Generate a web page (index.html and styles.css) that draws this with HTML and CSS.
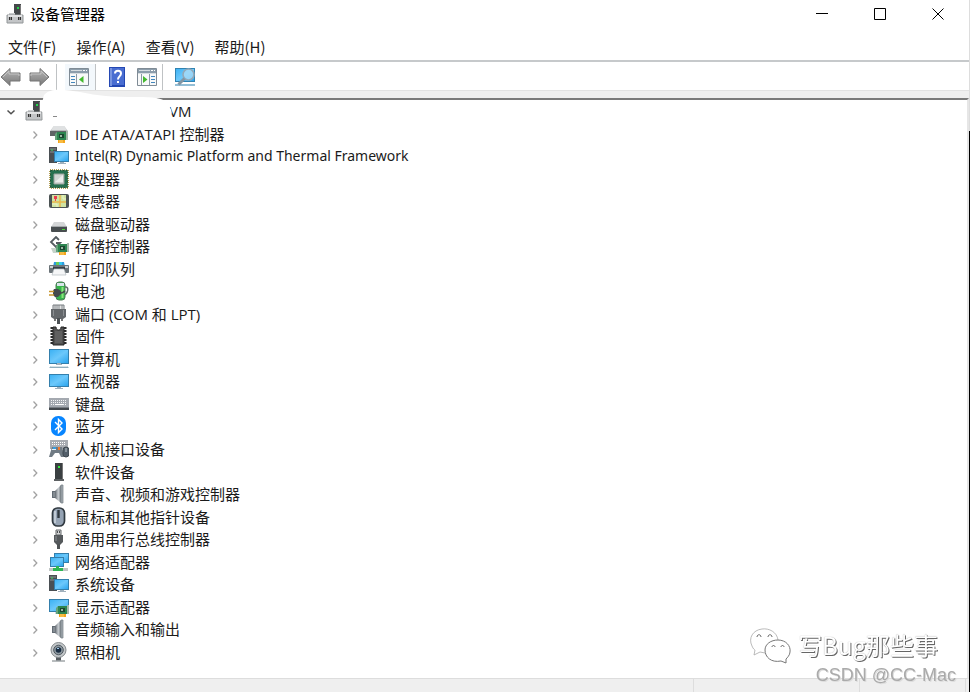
FILE: index.html
```html
<!DOCTYPE html>
<html lang="zh-CN">
<head>
<meta charset="utf-8">
<title>设备管理器</title>
<link rel="stylesheet" href="styles.css">
</head>
<body>
<svg class="defs" aria-hidden="true">
  <defs>
    <linearGradient id="screen" x1="0" y1="0" x2="1" y2="1"><stop offset="0" stop-color="#3db2f4"/><stop offset=".5" stop-color="#6cc8fb"/><stop offset="1" stop-color="#2ba5ee"/></linearGradient>
    <linearGradient id="cone" x1="0" y1="0" x2="1" y2="0"><stop offset="0" stop-color="#60676e"/><stop offset=".55" stop-color="#c9ced2"/><stop offset="1" stop-color="#737b82"/></linearGradient>
    <linearGradient id="arrow" x1="0" y1="0" x2="0" y2="1"><stop offset="0" stop-color="#b6b6b6"/><stop offset=".5" stop-color="#989898"/><stop offset="1" stop-color="#777"/></linearGradient>
    <symbol id="host" viewBox="0 0 18 20">
      <rect x="8" y="0" width="7" height="12" fill="#44484a"/><rect x="14" y="1" width="1" height="10" fill="#777"/><rect x="11" y="3" width="2" height="2" fill="#24d64a"/>
      <path d="M3 9h6v3H3z" fill="#c9cbcd"/><path d="M1 11h16v8H1z" fill="#c3c5c7" stroke="#929698"/><path d="M2 11h14v2H2z" fill="#e1e2e3"/><path d="M3 13h3v3H3zM12 13h3v3h-3z" fill="#333"/><path d="M4 13h1v3H4zM13 13h1v3h-1z" fill="#888"/>
    </symbol>
    <symbol id="card" viewBox="0 0 13 12">
      <path d="M2 1h9v8H2z" fill="#2d8550"/><path d="M0 3l2-2v8H0z" fill="#65a47b"/><path d="M11 0h2v9h-2z" fill="#a6b8aa"/><path d="M4 3h5v4H4z" fill="#1b4630"/><path d="M5 4h2v2H5z" fill="#9bb6a0"/><path d="M3 9h7v3H3z" fill="#f4a51b"/><path d="M5 9v3M7 9v3" stroke="#fbd16b" fill="none"/>
    </symbol>
    <symbol id="tower" viewBox="0 0 20 20">
      <path d="M0 1h8v16H0z" fill="#4a4f53"/><path d="M1 3h6M1 6h6" stroke="#8b9194"/><path d="M2 4h2" stroke="#42df65"/><path d="M5 5h15v11H5z" fill="#347fac"/><path d="M6 6h13v9H6z" fill="url(#screen)"/><path d="M11 16h4v1h2v1H9v-1h2z" fill="#a0b0bc"/>
    </symbol>
    <symbol id="speaker" viewBox="0 0 20 20">
      <path d="M3 7h4v7H3z" fill="#626b73"/><path d="M6 7l6-6v18l-6-5z" fill="url(#cone)"/><path d="M12 1h2v18h-2z" fill="#a5acb2" stroke="#737b82" stroke-width=".7"/><path d="M5 8v5" stroke="#a5adb3"/>
    </symbol>
    <symbol id="chevron" viewBox="0 0 10 10"><path d="M3.500 2.500 6.800 6 3.500 9.500" fill="none" stroke="#a2a2a2" stroke-width="1.300"/></symbol>
  </defs>
</svg>
<div class="window">
  <header class="titlebar">
    <svg class="app-icon"><use href="#host"/></svg>
    <h1>设备管理器</h1>
    <div class="window-controls">
      <button aria-label="最小化"><svg viewBox="0 0 13 13"><path d="M0 6.500h12" /></svg></button>
      <button aria-label="最大化"><svg viewBox="0 0 13 13"><path d="M.5 1.500h11v11H.5z"/></svg></button>
      <button aria-label="关闭"><svg viewBox="0 0 13 13"><path d="m.5 1.500 11 11m0-11-11 11"/></svg></button>
    </div>
  </header>
  <nav class="menubar">
    <button>文件(F)</button><button>操作(A)</button><button>查看(V)</button><button>帮助(H)</button>
  </nav>
  <div class="toolbar" role="toolbar">
    <button class="nav-tool" aria-label="后退"><svg viewBox="0 0 22 20"><path d="M1 10 10 1.500v4.500h10v8H10v4.500z" fill="url(#arrow)" stroke="#747474"/><path d="M3 10l6-6v3h10v2" fill="none" stroke="#c4c4c4"/></svg></button>
    <button class="nav-tool" aria-label="前进"><svg viewBox="0 0 22 20"><path d="M21 10 12 1.500v4.500H2v8h10v4.500z" fill="url(#arrow)" stroke="#747474"/><path d="M3 9V7h10V4l6 6" fill="none" stroke="#c4c4c4"/></svg></button>
    <span class="separator"></span>
    <button class="tool hot" aria-label="显示/隐藏控制台树"><svg viewBox="0 0 20 18"><path d="M.5.5h19v17H.5z" fill="#f8f9f9" stroke="#7f8b95"/><path d="M1 1h18v4H1z" fill="#8c9dab"/><path d="M2 2.500h11M1 5.500h18" stroke="#d6dce0"/><path d="M14 2h2v1h-2zM17 2h1v1h-1z" fill="#fff"/><path d="M7.500 6v11" stroke="#8b99a4"/><path d="M2 8.500h4M2 11.500h4M2 14.500h4" stroke="#4387bd"/><path d="M14.500 8v7L10 11.500z" fill="#43b92e"/></svg></button>
    <span class="separator"></span>
    <button class="tool" aria-label="帮助"><svg class="book" viewBox="0 0 16 20"><path d="M0 0h16v20H0z" fill="#2448b3"/><path d="M3 1h12v17H3z" fill="#496dd1"/><path d="M1 1h2v18H1z" fill="#7894df"/><path d="M6 6.500C6 2.800 12 2.800 12 6.500c0 3-3 2.800-3 6" fill="none" stroke="#fff" stroke-width="2"/><path d="M8 14h2v2H8z" fill="#fff"/></svg></button>
    <button class="tool" aria-label="属性"><svg viewBox="0 0 20 18"><path d="M.5.5h19v17H.5z" fill="#f8f9f9" stroke="#7f8b95"/><path d="M1 1h18v4H1z" fill="#8c9dab"/><path d="M2 2.500h11M1 5.500h18" stroke="#d6dce0"/><path d="M14 2h2v1h-2zM17 2h1v1h-1z" fill="#fff"/><path d="M12.500 6v11M4.500 6v11" stroke="#8b99a4"/><path d="M14 8.500h4M14 11.500h4M14 14.500h4" stroke="#4387bd"/><path d="M6 8v7l4.500-3.500z" fill="#43b92e"/></svg></button>
    <span class="separator"></span>
    <button class="tool" aria-label="扫描检测硬件改动"><svg class="scan" viewBox="0 0 22 20"><path d="M1 1h20v14H1z" fill="#3283b1"/><path d="M2 2h18v12H2z" fill="url(#screen)"/><path d="M1 18h20" stroke="#6fa8c9" stroke-width="1.500"/><circle cx="14.500" cy="7.500" r="5.500" fill="#a8dbf8" fill-opacity=".8" stroke="#93a9b9" stroke-width="1.600"/><path d="m10.500 11.500-6 6" stroke="#8296a4" stroke-width="3"/></svg></button>
  </div>
  <div class="band"></div>
  <main class="pane">
    <ul class="tree">
      <li class="root"><button class="expander" aria-label="折叠"><svg viewBox="0 0 10 10"><path d="M1.500 4.500 5 7.800 8.500 4.500" fill="none" stroke="#505050" stroke-width="1.500"/></svg></button><svg class="host"><use href="#host"/></svg><span class="host-name">VM</span>
        <svg class="redaction" viewBox="0 0 136 34" aria-hidden="true"><path d="M2 6C9-2 24 1 38 3c18 4 32 5 56 5 18 0 26 1 30 5 5 6 9 12 2 15L12 33 1 31 0 14z" fill="#fff"/><path d="M11 27.500h4" stroke="#888"/></svg></li>
      <li><button class="expander" aria-label="展开"><svg><use href="#chevron"/></svg></button><svg class="device" viewBox="0 0 20 20"><path d="M5 2h10l4 5v4H1V7z" fill="#b9bcbe"/><path d="M5 2h10l3 4H2z" fill="#dfe1e2"/><path d="M1 7h18v5H1z" fill="#5e6465"/><use href="#card" x="6" y="7" width="13" height="12"/></svg>IDE ATA/ATAPI 控制器</li>
      <li><button class="expander" aria-label="展开"><svg><use href="#chevron"/></svg></button><svg class="device"><use href="#tower"/></svg><span class="latin">Intel(R) Dynamic Platform and Thermal Framework</span></li>
      <li><button class="expander" aria-label="展开"><svg><use href="#chevron"/></svg></button><svg class="device" viewBox="0 0 20 20"><path d="M1 1h18v18H1z" fill="none" stroke="#b39e55" stroke-width="2" stroke-dasharray="1 1"/><path d="M1.500 1.500h17v17h-17z" fill="#26704f" stroke="#1c593d" stroke-dasharray="2 1"/><path d="M5 5h10v10H5z" fill="#d2d6d4" stroke="#9aa39e"/><path d="m6 13 8-7v7z" fill="#eceeed"/></svg>处理器</li>
      <li><button class="expander" aria-label="展开"><svg><use href="#chevron"/></svg></button><svg class="device" viewBox="0 0 20 20"><rect y="3" width="20" height="14" rx="2" fill="#4c5354"/><path d="M3 4h14v12H3z" fill="#cfe3a2"/><path d="M3 11h14M11 4v12" stroke="#e9b84c" stroke-width="1.500"/><path d="M3 13h5v3M14 4v4h3" fill="none" stroke="#edf4c9"/><path d="M5 5h3v3H7v2H6V8H5z" fill="#eb3b50"/></svg>传感器</li>
      <li><button class="expander" aria-label="展开"><svg><use href="#chevron"/></svg></button><svg class="device" viewBox="0 0 20 20"><path d="M5 8h10l3 5H2z" fill="#d4d6d7"/><rect x="2" y="12" width="16" height="6" rx="1" fill="#484e50"/><path d="M2 12.500h16" stroke="#a5a9ab"/><path d="M13 15h3v1h-3z" fill="#48df3a"/></svg>磁盘驱动器</li>
      <li><button class="expander" aria-label="展开"><svg><use href="#chevron"/></svg></button><svg class="device" viewBox="0 0 20 20"><path d="m10 4-3-3-5 5 5 5 4-4H7" fill="none" stroke="#535b60" stroke-width="1.800"/><path d="M2 12h9v5H4z" fill="#c6d3ca"/><use href="#card" x="7" y="7" width="13" height="12"/></svg>存储控制器</li>
      <li><button class="expander" aria-label="展开"><svg><use href="#chevron"/></svg></button><svg class="device" viewBox="0 0 20 20"><path d="M5 3h10l1 5H4z" fill="#2d9be0"/><path d="M7 3h3v4H7z" fill="#65cc59"/><path d="M10 3h3v3h-3z" fill="#34c7ef"/><rect y="6" width="20" height="8" rx="1" fill="#6b7378"/><path d="M1 7h3v2H1zM16 7h3v2h-3z" fill="#c8cdd0"/><path d="M4 8h12v3H4z" fill="#343e45"/><path d="M5 10h10l2 6H3z" fill="#f5f6f7" stroke="#b5bbc0" stroke-width=".7"/></svg>打印队列</li>
      <li><button class="expander" aria-label="展开"><svg><use href="#chevron"/></svg></button><svg class="device" viewBox="0 0 20 20"><path d="M16 6h1c3 0 2 7-2 8" fill="none" stroke="#62696b" stroke-width="1.500"/><rect x="7" y="1" width="9" height="18" rx="3" fill="#36b44b" stroke="#4e7b58"/><path d="M8 2h7v3H8z" fill="#d9e5ea"/><path d="M13.500 6v11" stroke="#8ae57c" stroke-width="2"/><path d="M5 8h4l3 2v3l-3 3H6l-2-2v-4z" fill="#454a4c"/><path d="M0 10.500h5M0 14h5" stroke="#c9972c" stroke-width="1.500"/><path d="M12 12c2 0 2-1 4-2" fill="none" stroke="#454a4c" stroke-width="1.500"/></svg>电池</li>
      <li><button class="expander" aria-label="展开"><svg><use href="#chevron"/></svg></button><svg class="device" viewBox="0 0 20 20"><path d="M4 1h11v5H4z" fill="#e2e3e4" stroke="#777c80"/><path d="M6 1v4m2-4v4m2-4v4m3-4v4" stroke="#73787b" stroke-width=".8"/><path d="M2 5h15v8l-3 2H5l-3-2z" fill="#64686b"/><path d="M4 6h1v6H4zM14 6h1v6h-1z" fill="#8b8f92"/><path d="M5 15h2v2H5zM12 15h2v2h-2z" fill="#777"/><path d="M8 14h3v6H8z" fill="#4b5053"/></svg>端口 (COM 和 LPT)</li>
      <li><button class="expander" aria-label="展开"><svg><use href="#chevron"/></svg></button><svg class="device" viewBox="0 0 20 20"><path d="M3 1v18M16 1v18" stroke="#2b2b2b" stroke-width="3" stroke-dasharray="2 1"/><path d="M4 1h3c0 4 5 4 5 0h3v18H4z" fill="#505050" stroke="#292929"/><path d="M6 5h7v12H6z" fill="#606060"/></svg>固件</li>
      <li><button class="expander" aria-label="展开"><svg><use href="#chevron"/></svg></button><svg class="device" viewBox="0 0 20 20"><path d="M0 0h20v15H0z" fill="#347fac"/><path d="M1 1h18v13H1z" fill="url(#screen)"/><path d="M8 14h4v1H8zM7 15h6v1H7z" fill="#a0b0bc"/><path d="M2 17h16l2 2H0z" fill="#8faebd"/><path d="M2 17.500h16" stroke="#d7e2e7"/></svg>计算机</li>
      <li><button class="expander" aria-label="展开"><svg><use href="#chevron"/></svg></button><svg class="device" viewBox="0 0 20 20"><path d="M0 3h20v13H0z" fill="#347fac"/><path d="M1 4h18v11H1z" fill="url(#screen)"/><path d="M8 16h4v1h2v1H6v-1h2z" fill="#a0b0bc"/></svg>监视器</li>
      <li><button class="expander" aria-label="展开"><svg><use href="#chevron"/></svg></button><svg class="device" viewBox="0 0 20 20"><path d="M0 4h20v9H0z" fill="#a4a9b0"/><path d="M2 6.500h16M2 8.500h16M2 10.500h16" stroke="#f4f5f6" stroke-dasharray="1 1"/><path d="M6 10.500h8" stroke="#fff"/><path d="M0 14h20v2H0z" fill="#42474c"/><path d="M0 13h20v1H0z" fill="#777d83"/></svg>键盘</li>
      <li><button class="expander" aria-label="展开"><svg><use href="#chevron"/></svg></button><svg class="device" viewBox="0 0 20 20"><rect x="2" width="15" height="20" rx="7" fill="#0785ff"/><path d="m6 6 7 7-3.500 3.500V3.500L13 7l-7 7" fill="none" stroke="#fff" stroke-width="1.400"/></svg>蓝牙</li>
      <li><button class="expander" aria-label="展开"><svg><use href="#chevron"/></svg></button><svg class="device" viewBox="0 0 20 20"><path d="M1 1h18v9H1z" fill="#a8acb2"/><path d="M3 3.500h14M3 5.500h14" stroke="#fff" stroke-dasharray="1 1"/><path d="M3 8h10l2 10h-3l-2-4H6l-3 4H0z" fill="#707b84"/><path d="M4 8h3v3H4z" fill="#369ce0"/><path d="M9 8h2v3H9z" fill="#ed7b32"/><path d="M3 10.500h4" stroke="#e4f2fc"/><rect x="14" y="8" width="6" height="10" rx="3" fill="#535f6a" stroke="#3f4850"/><path d="M17 9v4" stroke="#bdc7cd"/></svg>人机接口设备</li>
      <li><button class="expander" aria-label="展开"><svg><use href="#chevron"/></svg></button><svg class="device" viewBox="0 0 20 20"><path d="M6 1h8v17H6z" fill="#3a3f41"/><path d="M13 1h1v17h-1z" fill="#777"/><path d="M9 4h2v2H9z" fill="#32ec3d"/><path d="M5 17h10v2H5z" fill="#5c6062"/></svg>软件设备</li>
      <li><button class="expander" aria-label="展开"><svg><use href="#chevron"/></svg></button><svg class="device"><use href="#speaker"/></svg>声音、视频和游戏控制器</li>
      <li><button class="expander" aria-label="展开"><svg><use href="#chevron"/></svg></button><svg class="device" viewBox="0 0 20 20"><rect x="3.500" y="1" width="12" height="18" rx="5" fill="#95a3b4" stroke="#303940" stroke-width="1.700"/><path d="M6 4v12" stroke="#c0cad4" stroke-width="2"/><path d="M9.500 3v8" stroke="#303940" stroke-width="2.400"/></svg>鼠标和其他指针设备</li>
      <li><button class="expander" aria-label="展开"><svg><use href="#chevron"/></svg></button><svg class="device" viewBox="0 0 20 20"><path d="M7 1h5v5H7z" fill="#d4d5d6" stroke="#65696b"/><path d="M8 2h1v2H8zM10 2h1v2h-1z" fill="#4f5355"/><path d="M5 6h9v7l-3 3H8l-3-3z" fill="#55595c"/><path d="M7 7v5" stroke="#8a8e91"/><path d="M8 15h3v5H8z" fill="#4f5355"/></svg>通用串行总线控制器</li>
      <li><button class="expander" aria-label="展开"><svg><use href="#chevron"/></svg></button><svg class="device" viewBox="0 0 20 20"><path d="M5 1h15v10H5z" fill="#347fac"/><path d="M6 2h13v8H6z" fill="url(#screen)"/><path d="M1 5h14v10H1z" fill="#347fac"/><path d="M2 6h12v8H2z" fill="url(#screen)"/><path d="M0 17.500h19" stroke="#c1c6c5" stroke-width="3"/><path d="M7 14h3v2h4v3H4v-3h3z" fill="#2eb653"/></svg>网络适配器</li>
      <li><button class="expander" aria-label="展开"><svg><use href="#chevron"/></svg></button><svg class="device"><use href="#tower"/></svg>系统设备</li>
      <li><button class="expander" aria-label="展开"><svg><use href="#chevron"/></svg></button><svg class="device" viewBox="0 0 20 20"><path d="M0 2h20v13H0z" fill="#347fac"/><path d="M1 3h18v11H1z" fill="url(#screen)"/><path d="M6 16h5" stroke="#a0b0bc"/><use href="#card" x="7" y="8" width="13" height="12"/></svg>显示适配器</li>
      <li><button class="expander" aria-label="展开"><svg><use href="#chevron"/></svg></button><svg class="device"><use href="#speaker"/></svg>音频输入和输出</li>
      <li><button class="expander" aria-label="展开"><svg><use href="#chevron"/></svg></button><svg class="device" viewBox="0 0 20 20"><path d="M7 15h5v4H7z" fill="#555b5f"/><path d="M3 19h13" stroke="#a1a6a9" stroke-width="1.500"/><circle cx="9.500" cy="8" r="7.500" fill="#c4c8ca" stroke="#858a8d"/><circle cx="9.500" cy="8" r="4.800" fill="#8d989f" stroke="#4f585f"/><circle cx="9.500" cy="8" r="2.800" fill="#192c41"/><path d="M8 6h2v1H8z" fill="#9ec8e6"/></svg>照相机</li>
    </ul>
  </main>
  <footer class="statusbar"><span></span><span></span><span></span></footer>
</div>
<aside class="watermark">
  <svg viewBox="0 0 44 38"><path d="M29 13C28 5 20 1 13 2 4 3-1 11 3 19c1 3 3 4 3 4l-1 5 6-3 5 1" fill="#fff" stroke="#aaa" stroke-width=".8"/><path d="M29 13c8 0 13 6 12 12 0 3-3 6-4 7v4l-5-2c-10 2-16-4-16-11 0-6 6-10 13-10z" fill="#fff" stroke="#777"/><path d="M8 10c0-3 4-3 4 0M19 10c0-3 4-3 4 0M23 20c0-2 3-2 3 0M32 20c0-2 3-2 3 0" fill="none" stroke="#666"/></svg>
  <span class="author">写Bug那些事</span>
  <span class="source">CSDN @CC-Mac</span>
</aside>
</body>
</html>
```
FILE: styles.css
```css
* { box-sizing: border-box; }

body {
  margin: 0;
  background: #fff;
  color: #1b1b1b;
  font: 15px/20px "Open Sans", "Noto Sans CJK SC", sans-serif;
}

button {
  padding: 0;
  border: 0;
  background: none;
  color: inherit;
  font: inherit;
}

svg { display: block; flex: none; }
.defs { position: absolute; width: 0; height: 0; }

.window {
  display: flex;
  flex-direction: column;
  min-height: 100vh;
  border-right: 1px solid #000;
  border-image: linear-gradient(#ddd 19%, #000 19%) 1;
}

.titlebar { display: flex; align-items: center; height: 27px; padding: 0 2px 0 6px; }
.app-icon { width: 18px; height: 20px; margin-right: 6px; }
h1 { flex: 1; margin: 0; color: #000; font-size: 15px; font-weight: 400; }
.window-controls { display: flex; }
.window-controls button { display: grid; place-items: center; width: 58px; height: 27px; }
.window-controls svg { width: 13px; height: 13px; fill: none; stroke: #000; }

.menubar {
  display: flex;
  gap: 20px;
  height: 35px;
  padding: 7px 8px 0;
  border-bottom: 2px solid #c6c9cb;
}
.menubar button { height: 26px; font-family: "Noto Sans CJK SC", sans-serif; }

.toolbar { display: flex; align-items: center; height: 28px; padding-top: 2px; }
.nav-tool { width: 28px; }
.nav-tool svg { width: 22px; height: 20px; }
.separator { width: 1px; height: 26px; background: #bfc2c4; }
.tool { display: grid; place-items: center; width: 30px; height: 26px; }
.hot { width: 38px; padding-left: 6px; background: linear-gradient(90deg, #fff 8px, #f3f8fc 8px); }
.tool svg { width: 20px; height: 18px; }
.tool .book { width: 16px; height: 20px; }
.tool .scan { width: 22px; height: 20px; }
.toolbar .separator + .tool:nth-child(6) { margin-left: 6px; }
.toolbar .tool:last-child { width: 44px; }

.band {
  height: 8px;
  border-top: 1px solid #e2e2e2;
  background: #efefef;
}

.pane {
  display: flex;
  flex: 1;
  padding-bottom: 15px;
  border-top: 2px solid #7a7a7a;
  border-right: 2px solid #e6e6e6;
  border-bottom: 1px solid #ddd;
}

.tree {
  display: flex;
  flex: 1;
  flex-direction: column;
  margin: 0;
  padding: 0;
  list-style: none;
}
.tree li {
  display: flex;
  flex: 1 0 22px;
  align-items: center;
  padding-left: 30px;
  white-space: pre;
}
.expander { width: 10px; height: 10px; margin-right: 9px; }
.expander svg { width: 10px; height: 10px; }
.device { width: 20px; height: 20px; margin-right: 6px; }
.latin { font-family: "Noto Sans", sans-serif; font-size: 14px; }

.tree .root { position: relative; padding-left: 6px; }
.host { width: 18px; height: 20px; }
.host-name { margin-left: 126px; }
.redaction { position: absolute; top: -11px; left: 42px; width: 136px; height: 34px; }

.statusbar {
  display: flex;
  height: 13px;
  padding-right: 3px;
  background: #efefef;
}
.statusbar span { width: 106px; border-right: 1px solid #ddd; }
.statusbar span:first-child { flex: 1; }
.statusbar span:nth-child(2) { width: 166px; }

.watermark {
  position: fixed;
  right: 14px;
  bottom: 7px;
  display: grid;
  grid-template-columns: 44px auto;
  column-gap: 5px;
}
.watermark svg { width: 44px; height: 38px; }
.author {
  padding-right: 18px;
  color: #fff;
  font: 24px/36px "Noto Sans CJK SC", sans-serif;
  text-shadow: 1px 1px 0 #666, 0 0 1px #999;
}
.source {
  grid-column: 1 / -1;
  justify-self: end;
  color: #aaa;
  font: 18px/20px "Liberation Sans", sans-serif;
  text-shadow: 1px 1px 0 #ddd;
}
```
